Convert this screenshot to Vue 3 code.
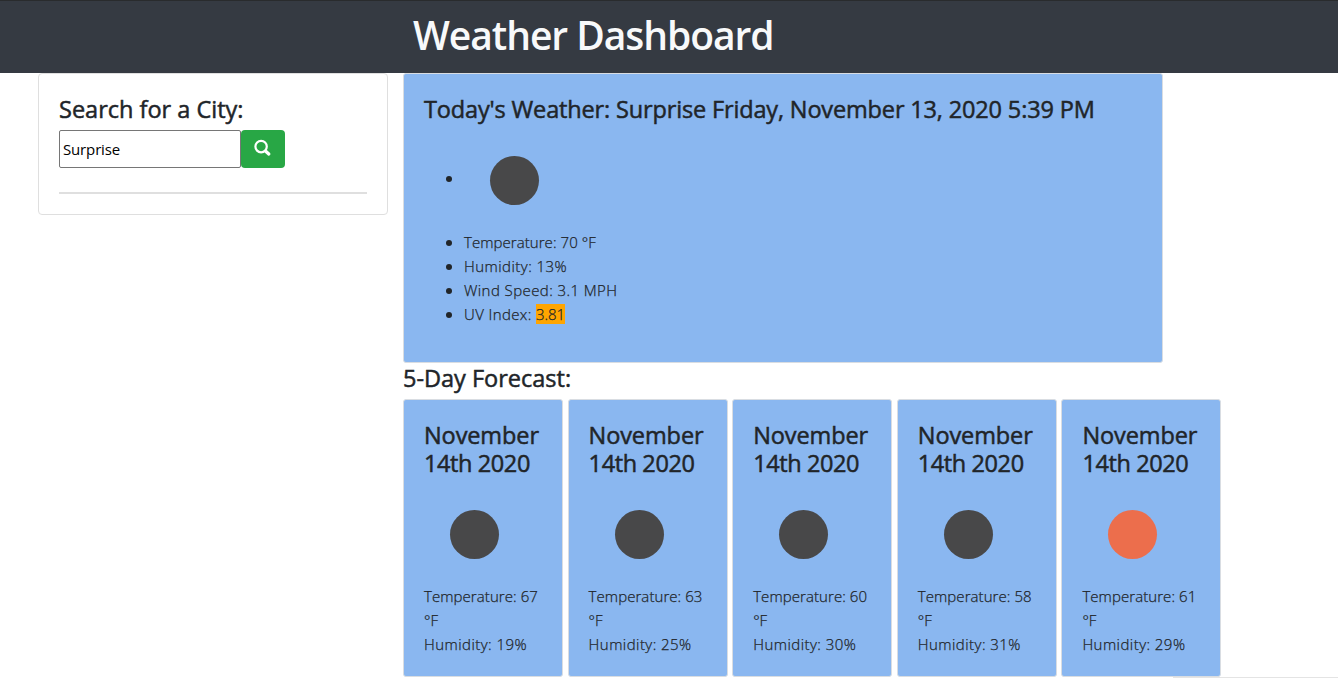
<script setup>
import { ref } from 'vue'

const city = ref('Surprise')
const today = [
  { text: 'Temperature: 70 °F', cls: 't1' },
  { text: 'Humidity: 13%', cls: 't2' },
  { text: 'Wind Speed: 3.1 MPH', cls: 't3' },
]
const days = [
  { temp: 67, humidity: 19, sky: 'night' },
  { temp: 63, humidity: 25, sky: 'night' },
  { temp: 60, humidity: 30, sky: 'night' },
  { temp: 58, humidity: 31, sky: 'night' },
  { temp: 61, humidity: 29, sky: 'day' },
]
</script>

<template>
  <div class="page">
    <header class="banner"><h1>Weather Dashboard</h1></header>
    <main class="columns">
      <aside class="card search">
        <h4><span class="search-title">Search for a City:</span></h4>
        <div class="search-row">
          <input v-model="city" type="text" aria-label="City" />
          <button type="button" aria-label="Search">
            <svg width="18" height="18" viewBox="0 0 18 18" fill="none" stroke="#fff">
              <circle cx="7.1" cy="7.6" r="5.7" stroke-width="2.2" />
              <path d="M12 12.5l2.8 2.5" stroke-width="3.3" stroke-linecap="round" />
            </svg>
          </button>
        </div>
        <div class="rule"></div>
      </aside>
      <section class="results">
        <article class="card blue today">
          <h4><span class="today-title">Today's Weather: Surprise Friday, November 13, 2020 5:39 PM</span></h4>
          <ul>
            <li class="sky-row"><div class="sky night"></div></li>
            <li v-for="t in today" :key="t.text"><span :class="t.cls">{{ t.text }}</span></li>
            <li><span class="uv-label">UV Index: </span><span class="uv">3.81</span></li>
          </ul>
        </article>
        <h4 class="forecast-heading"><span class="forecast-title">5-Day Forecast:</span></h4>
        <div class="forecast">
          <article v-for="(d, i) in days" :key="i" class="card blue day-card">
            <h4><div class="month">November</div><div class="date">14th 2020</div></h4>
            <div class="sky" :class="d.sky"></div>
            <p><span class="temp">Temperature: {{ d.temp }}</span><br />°F</p>
            <p><span class="hum">Humidity: {{ d.humidity }}%</span></p>
          </article>
        </div>
      </section>
    </main>
    <div class="edge"></div>
  </div>
</template>

<style>
body { margin: 0; background: #fff; overflow: hidden; }
</style>

<style scoped>
* { box-sizing: border-box; }
.page {
  position: relative;
  width: 1338px;
  height: 678px;
  overflow: hidden;
  color: #212529;
  font: 300 16px/24px "Open Sans", "Noto Sans", sans-serif;
}
.banner {
  height: 73px;
  padding: 10px 0 0 413px;
  border-top: 1px solid #292b2d;
  background: #353a42;
  color: #f8f9fa;
}
h1 { margin: 0; font-size: 39px; line-height: 48px; font-weight: 600; white-space: nowrap; letter-spacing: -1.05px; }
h4 {
  margin: 0 0 8px;
  font-size: 23.5px;
  line-height: 28.8px;
  font-weight: 400;
  white-space: nowrap;
  -webkit-text-stroke: 0.5px currentColor;
}
.search h4, .today h4 { padding-top: 1px; margin-bottom: 7px; }
.search-title { letter-spacing: 0; }
.today-title { letter-spacing: -0.15px; }
.forecast-title { letter-spacing: 0; }
.month { letter-spacing: -0.1px; }
.date { letter-spacing: -0.4px; }
.columns { display: flex; align-items: flex-start; gap: 15px; padding-left: 38px; }
.card { border: 1px solid #dfdfdf; border-radius: 4px; padding: 20px; }
.search { width: 350px; height: 142px; }
.search-row { display: flex; height: 38px; margin-top: -1px; }
input {
  width: 182px;
  height: 38px;
  padding: 1px 3px;
  border: 1px solid #767676;
  border-radius: 2px;
  outline: 0;
  background: #fff;
  color: #000;
  font: 400 15px/24px "Open Sans", "Noto Sans", sans-serif;
  letter-spacing: -0.15px;
}
button {
  display: flex;
  justify-content: center;
  width: 44px;
  height: 38px;
  padding: 9px 0 0;
  border: 0;
  border-radius: 4px;
  background: #28a745;
}
.rule { height: 2px; margin-top: 24px; background: #dfdfdf; }
.blue { background: #8ab7f0; border-color: #d9dde2; border-radius: 3px; }
.today { width: 760px; height: 290px; }
ul { margin: 0; padding: 0 0 0 40px; list-style: none; }
li { position: relative; height: 24px; white-space: nowrap; font-size: 15px; }
li span, p { -webkit-text-stroke: 0.25px currentColor; }
li::before {
  content: "";
  position: absolute;
  left: -18px;
  top: 10px;
  width: 6px;
  height: 6px;
  border-radius: 50%;
  background: #212529;
}
.sky-row { height: 99px; }
.sky-row::before { top: 45px; }
.sky { height: 99px; padding: 25px 0 0 26px; }
.sky::before { content: ""; display: block; width: 49px; height: 49px; border-radius: 50%; background: #484849; }
.day::before { background: #ec6e4c; }
.t1 { letter-spacing: 0.06px; }
.t2 { letter-spacing: 0.46px; }
.t3 { letter-spacing: 0.42px; }
.uv-label { white-space: pre; letter-spacing: 0.38px; }
.uv { letter-spacing: -0.05px; background: #ffa500; }
.forecast-heading { padding-top: 1px; margin-bottom: 6.4px; }
.forecast { display: flex; gap: 4.6px; }
.day-card { flex: none; width: 160px; height: 278px; padding-top: 21px; }
.day-card h4 { line-height: 28px; margin-bottom: 7.6px; }
.temp { letter-spacing: 0.07px; }
.hum { letter-spacing: 0.45px; }
p { margin: 0; font-size: 15px; white-space: nowrap; }
.edge { position: absolute; left: 1173px; top: 677px; width: 165px; height: 1px; background: #e4e4e4; }
</style>
